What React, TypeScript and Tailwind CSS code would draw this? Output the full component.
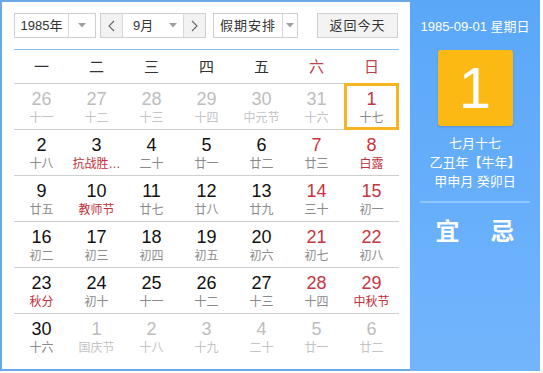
import React from 'react'

interface Day {
  d: number
  lunar: string
  other?: boolean // not in current month
  fest?: boolean // festival / solar term (red)
  sel?: boolean
}

const cjk = "font-['Liberation_Sans','Noto_Sans_CJK_SC',sans-serif]"

const weeks: Day[][] = [
  [
    { d: 26, lunar: '十一', other: true },
    { d: 27, lunar: '十二', other: true },
    { d: 28, lunar: '十三', other: true },
    { d: 29, lunar: '十四', other: true },
    { d: 30, lunar: '中元节', other: true },
    { d: 31, lunar: '十六', other: true },
    { d: 1, lunar: '十七', sel: true },
  ],
  [
    { d: 2, lunar: '十八' },
    { d: 3, lunar: '抗战胜…', fest: true },
    { d: 4, lunar: '二十' },
    { d: 5, lunar: '廿一' },
    { d: 6, lunar: '廿二' },
    { d: 7, lunar: '廿三' },
    { d: 8, lunar: '白露', fest: true },
  ],
  [
    { d: 9, lunar: '廿五' },
    { d: 10, lunar: '教师节', fest: true },
    { d: 11, lunar: '廿七' },
    { d: 12, lunar: '廿八' },
    { d: 13, lunar: '廿九' },
    { d: 14, lunar: '三十' },
    { d: 15, lunar: '初一' },
  ],
  [
    { d: 16, lunar: '初二' },
    { d: 17, lunar: '初三' },
    { d: 18, lunar: '初四' },
    { d: 19, lunar: '初五' },
    { d: 20, lunar: '初六' },
    { d: 21, lunar: '初七' },
    { d: 22, lunar: '初八' },
  ],
  [
    { d: 23, lunar: '秋分', fest: true },
    { d: 24, lunar: '初十' },
    { d: 25, lunar: '十一' },
    { d: 26, lunar: '十二' },
    { d: 27, lunar: '十三' },
    { d: 28, lunar: '十四' },
    { d: 29, lunar: '中秋节', fest: true },
  ],
  [
    { d: 30, lunar: '十六' },
    { d: 1, lunar: '国庆节', other: true },
    { d: 2, lunar: '十八', other: true },
    { d: 3, lunar: '十九', other: true },
    { d: 4, lunar: '二十', other: true },
    { d: 5, lunar: '廿一', other: true },
    { d: 6, lunar: '廿二', other: true },
  ],
]

const weekdays = ['一', '二', '三', '四', '五', '六', '日']

const Caret = () => (
  <svg width="8" height="5" viewBox="0 0 8 5">
    <path d="M0 0 L8 0 L4 4.5 Z" fill="#a0a0a0" />
  </svg>
)

const Chevron = ({ dir }: { dir: 'l' | 'r' }) => (
  <svg width="7" height="12" viewBox="0 0 7 12">
    <polyline
      points={dir === 'l' ? '6,1 1,6 6,11' : '1,1 6,6 1,11'}
      fill="none"
      stroke="#666"
      strokeWidth="1.1"
    />
  </svg>
)

const numColor = (day: Day, col: number) => {
  if (day.other) return 'text-[#bdbdbd]'
  if (col >= 5) return 'text-[#c8343f]'
  return 'text-[#111]'
}

const lunarColor = (day: Day) => {
  if (day.other) return 'text-[#c4c4c4]'
  if (day.fest) return 'text-[#c0303a]'
  return 'text-[#8a8a8a]'
}

export default function App() {
  return (
    <div className={`flex h-[371px] w-[540px] bg-white ${cjk}`}>
      {/* calendar */}
      <div className="flex w-[410px] flex-col border-2 border-r-0 border-[#6aa8e8] pl-3 pr-[11px] pt-[11px]">
        <div className="flex h-[25px] items-stretch text-[13px] text-[#333]">
          <div className="flex w-[82px] border border-[#cfcfcf]">
            <div className="flex flex-1 items-center justify-center">1985年</div>
            <div className="flex w-[27px] items-center justify-center border-l border-[#d8d8d8]">
              <Caret />
            </div>
          </div>
          <div className="ml-1 flex w-[106px] border border-[#cfcfcf]">
            <div className="flex w-[22px] items-center justify-center border-r border-[#d8d8d8] bg-[#f2f2f2]">
              <Chevron dir="l" />
            </div>
            <div className="flex flex-1 items-center pl-[10px]">9月</div>
            <div className="flex w-[20px] items-center justify-center">
              <Caret />
            </div>
            <div className="flex w-[22px] items-center justify-center border-l border-[#d8d8d8] bg-[#f2f2f2]">
              <Chevron dir="r" />
            </div>
          </div>
          <div className="ml-[7px] flex w-[85px] border border-[#cfcfcf]">
            <div className="flex flex-1 items-center justify-center tracking-[1px]">假期安排</div>
            <div className="flex w-[15px] items-center justify-center border-l border-[#d8d8d8]">
              <Caret />
            </div>
          </div>
          <div className="ml-[19px] flex w-[81px] items-center justify-center border border-[#d0d0d0] bg-[#f3f3f3] tracking-[1px]">
            返回今天
          </div>
        </div>

        <div className="mt-[11px] h-px bg-[#86bde9]" />

        <div className="grid h-[34px] grid-cols-7 border-b border-[#cfcfcf] text-[15px]">
          {weekdays.map((w, i) => (
            <div
              key={w}
              className={`flex items-center justify-center pt-px ${i >= 5 ? 'text-[#c0404a]' : 'text-[#333]'}`}
            >
              {w}
            </div>
          ))}
        </div>

        {weeks.map((week, r) => (
          <div
            key={r}
            className={`grid h-[46px] grid-cols-7 ${r < weeks.length - 1 ? 'border-b border-[#cfcfcf]' : ''}`}
          >
            {week.map((day, c) => (
              <div key={c} className="relative flex flex-col items-center pt-[5px]">
                {day.sel && (
                  <div className="absolute -top-px bottom-[-1px] left-0 right-0 border-[3px] border-[#f5b621]" />
                )}
                <div
                  className={`font-['Liberation_Sans',sans-serif] text-[18px] leading-[20px] ${numColor(day, c)}`}
                >
                  {day.d}
                </div>
                <div className={`mt-px text-[12px] leading-[16px] ${lunarColor(day)}`}>{day.lunar}</div>
              </div>
            ))}
          </div>
        ))}
      </div>

      {/* side panel */}
      <div className="flex w-[130px] flex-col items-center bg-gradient-to-b from-[#5aa7f8] to-[#72b5fd] text-white">
        <div className="mt-[19px] text-[13px] leading-[16px]">1985-09-01 星期日</div>
        <div className="mt-[15px] flex h-[76px] w-[75px] items-center justify-center rounded-[3px] bg-[#fcb813] font-['Liberation_Sans',sans-serif] text-[58px] leading-none shadow-[0_1px_2px_rgba(0,0,0,0.15)]">
          1
        </div>
        <div className="mt-[8px] flex flex-col items-center text-[13px] leading-[19px]">
          <div>七月十七</div>
          <div>乙丑年【牛年】</div>
          <div>甲申月 癸卯日</div>
        </div>
        <div className="mt-[10px] h-[2px] w-[110px] bg-[#8fc6fd]" />
        <div className="mt-[16px] flex gap-[31px] text-[24px] font-bold leading-[26px]">
          <span>宜</span>
          <span>忌</span>
        </div>
      </div>
    </div>
  )
}
